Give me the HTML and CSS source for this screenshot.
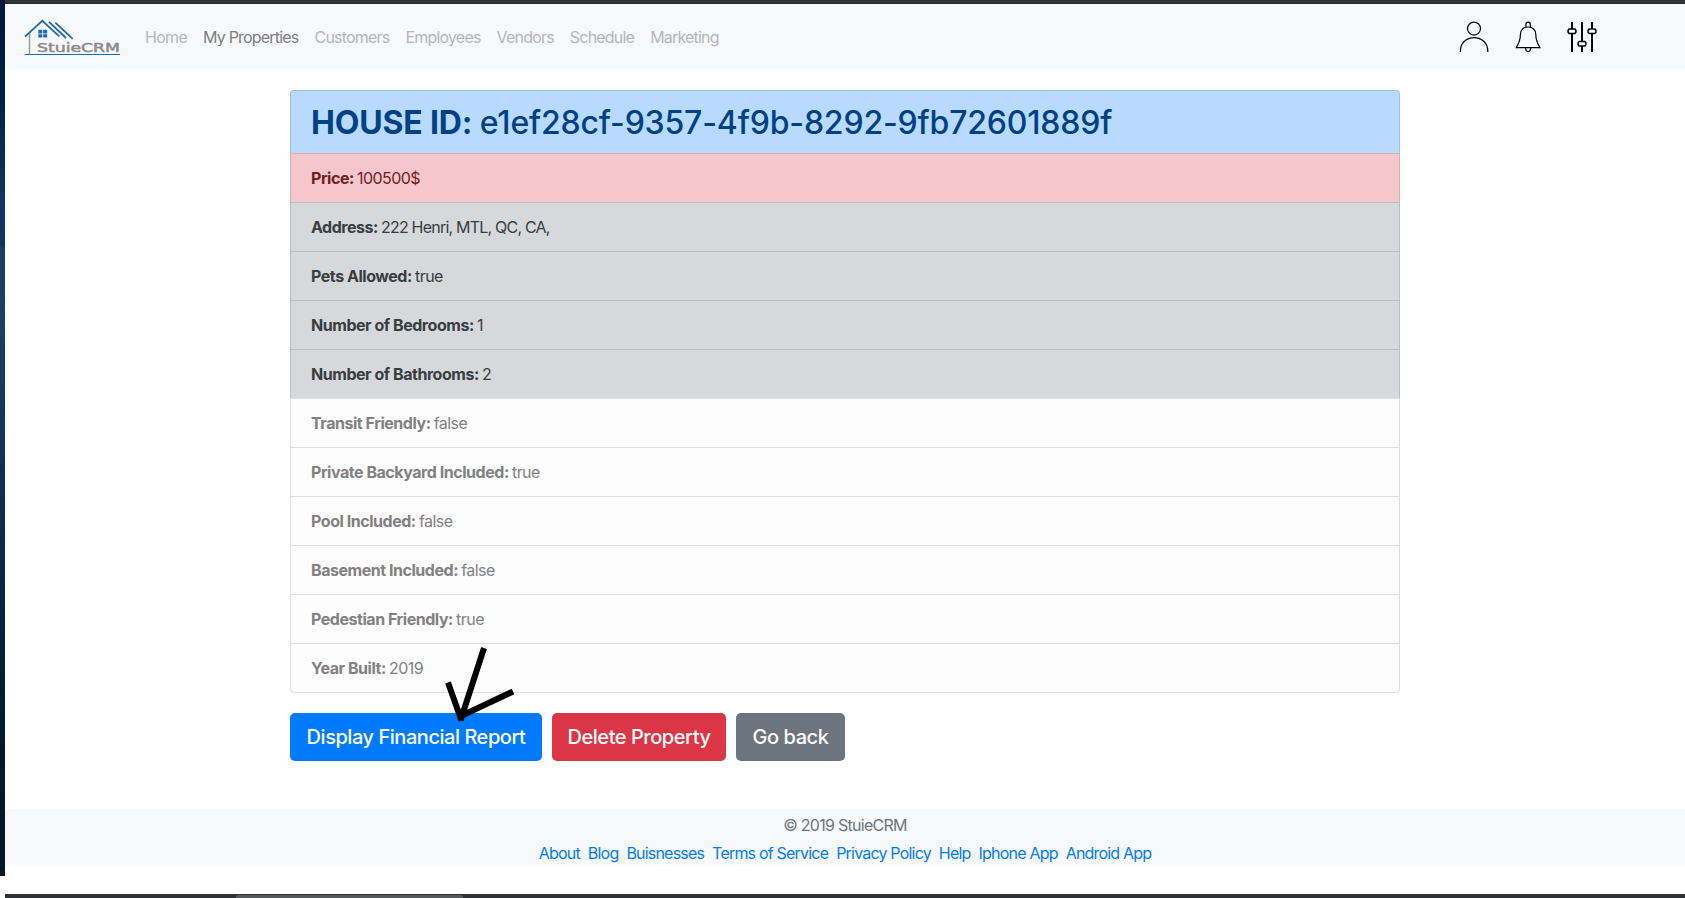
FILE: index.html
```html
<!DOCTYPE html>
<html lang="en">
<head>
<meta charset="utf-8">
<title>StuieCRM - My Properties</title>
<link rel="stylesheet" href="styles.css">
</head>
<body>
<div class="desktop-edge"></div>
<div class="window">
  <div class="window-top"></div>
  <header class="navbar">
    <a class="brand">
      <svg width="98" height="38" viewBox="0 0 98 38" fill="none">
        <path d="M6.500 13.500V35" stroke="#999" stroke-width="1.400"/>
        <path d="M2 17.700 19.300 1.800 36.300 17.300M26 2.800 43 19M32.300 3.700 49.700 19.900" stroke="#2069ab" stroke-width="1.800"/>
        <path d="M15.300 10.800h4v3.600h-4zM20.200 10.800h4v3.600h-4zM15.300 15.300h4v3.200h-4zM20.200 15.300h4v3.200h-4z" fill="#2069ab"/>
        <path d="M1.700 35.500H97" stroke="#2069ab" stroke-width="1.200"/>
        <text class="brand-text" x="14" y="32.500" textLength="83" lengthAdjust="spacingAndGlyphs">StuieCRM</text>
      </svg>
    </a>
    <nav class="nav">
      <a class="nav-link">Home</a>
      <a class="nav-link active">My Properties</a>
      <a class="nav-link">Customers</a>
      <a class="nav-link">Employees</a>
      <a class="nav-link">Vendors</a>
      <a class="nav-link">Schedule</a>
      <a class="nav-link">Marketing</a>
    </nav>
    <div class="nav-icons">
      <svg width="32" height="32" viewBox="0 0 32 32" fill="none" stroke="#000" stroke-width="1.200">
        <circle cx="16" cy="7.600" r="6.500"/>
        <path d="M2.400 31v-1C2.400 22 8.400 16.600 16 16.600S29.800 22 29.800 30v1"/>
      </svg>
      <svg width="32" height="32" viewBox="0 0 32 32" fill="none" stroke="#000" stroke-width="1.200">
        <path d="M4.300 26.600h23.600c-2.600-4.300-4.100-7.200-4.100-13.100 0-4.600-3.200-7.500-7.700-7.500s-7.700 2.900-7.700 7.500c0 5.900-1.500 8.800-4.100 13.100z"/>
        <path d="M13.900 6V3.300a2.200 2.200 0 0 1 4.400 0V6M13.600 27c0 2.200 1.100 3.500 2.500 3.500s2.500-1.300 2.500-3.500"/>
      </svg>
      <svg width="32" height="32" viewBox="0 0 32 32" fill="none" stroke="#000">
        <path d="M6 1v7M6 12.500v18.500M16 1v19.500M16 25v6M26 1v7M26 12.500v18.500" stroke-width="2"/>
        <path d="M3.100 8h5.800l1 1.200v2l-1 1.200H3.100l-1-1.200v-2zM13.100 20.500h5.800l1 1.200v2l-1 1.200h-5.800l-1-1.200v-2zM23.100 8h5.800l1 1.200v2l-1 1.200h-5.800l-1-1.200v-2z" stroke-width="1.500"/>
      </svg>
    </div>
  </header>
  <main class="container">
    <ul class="list-group">
      <li class="item primary"><h1><strong>HOUSE ID:</strong> e1ef28cf-9357-4f9b-8292-9fb72601889f</h1></li>
      <li class="item danger"><strong>Price:</strong> 100500$</li>
      <li class="item secondary tight"><strong>Address:</strong> 222 Henri, MTL, QC, CA,</li>
      <li class="item secondary"><strong>Pets Allowed:</strong> true</li>
      <li class="item secondary"><strong>Number of Bedrooms:</strong> 1</li>
      <li class="item secondary"><strong>Number of Bathrooms:</strong> 2</li>
      <li class="item light"><strong>Transit Friendly:</strong> false</li>
      <li class="item light"><strong>Private Backyard Included:</strong> true</li>
      <li class="item light"><strong>Pool Included:</strong> false</li>
      <li class="item light"><strong>Basement Included:</strong> false</li>
      <li class="item light"><strong>Pedestian Friendly:</strong> true</li>
      <li class="item light"><strong>Year Built:</strong> 2019</li>
    </ul>
    <div class="actions">
      <button class="btn btn-primary">Display Financial Report</button>
      <button class="btn btn-danger">Delete Property</button>
      <button class="btn btn-secondary">Go back</button>
      <svg class="pointer-arrow" width="80" height="84" viewBox="0 0 80 84" fill="none" stroke="#000" stroke-width="6">
        <path d="M44 8 20.500 80.500M8 42.500 21.500 80.500M73 51.500 20 76.500"/>
      </svg>
    </div>
  </main>
  <footer class="footer">
    <p class="copyright">© 2019 StuieCRM</p>
    <div class="links">
      <a>About</a><a>Blog</a><a>Buisnesses</a><a>Terms of Service</a><a>Privacy Policy</a><a>Help</a><a>Iphone App</a><a>Android App</a>
    </div>
  </footer>
  <div class="window-bottom"><div class="dock-tab"></div></div>
</div>
</body>
</html>
```
FILE: styles.css
```css
* { box-sizing: border-box; }
body {
  margin: 0;
  height: 898px;
  display: flex;
  overflow: hidden;
  background: #fff;
  color: #212529;
  font: 400 16px/24px Inter, "Liberation Sans", sans-serif;
}
.desktop-edge {
  width: 5px;
  height: 876px;
  flex: none;
  background: linear-gradient(#02173b 0, #021f45 90px, #14325f 200px, #15335f 246px, #1f3d67 248px, #1b3a60 380px, #112b50 500px, #0b2140 620px, #05192d 720px, #071625 876px);
}
.window { flex: 1; height: 898px; display: flex; flex-direction: column; }
.window-top { height: 4px; flex: none; background: #333336; border-bottom: 1px solid #29292c; }
.navbar {
  height: 66px;
  flex: none;
  display: flex;
  align-items: center;
  padding: 0 87px 0 18px;
  background: #f8f9fb;
}
.brand { display: flex; margin-right: 16px; }
.brand svg { margin-top: 2px; }
.brand-text { font: 400 13px "DejaVu Sans", sans-serif; fill: #8b8b8b; stroke: #8b8b8b; stroke-width: .5px; }
.nav { display: flex; }
.nav-link { padding: 8px; letter-spacing: -.8px; color: #b5b6b7; white-space: nowrap; }
.nav-link:first-child { letter-spacing: -.7px; }
.nav-link.active { color: #7d7e7f; }
.nav-icons { display: flex; gap: 22px; margin-left: auto; }
.container { width: 1110px; margin: 20px auto 0; }
.list-group { list-style: none; margin: 0; padding: 0; }
.item {
  padding: 12px 20px;
  margin-bottom: -1px;
  border: 1px solid rgba(0, 0, 0, .125);
  letter-spacing: -.55px;
}
.item:first-child { border-radius: 4px 4px 0 0; }
.item:last-child { border-radius: 0 0 4px 4px; margin-bottom: 0; }
.item strong { font-weight: 700; letter-spacing: -.46px; margin-right: -.8px; }
.item.tight { letter-spacing: -.78px; }
.primary { background: #b8daff; color: #004085; }
.danger { background: #f5c6cb; color: #721c24; }
.secondary { background: #d6d8db; color: #383d41; }
.light { background: #fdfdfd; color: #818182; position: relative; border-color: #dfdfdf; }
h1 { margin: 0; padding-top: 1px; font-size: 32px; line-height: 37.400px; font-weight: 500; letter-spacing: -.17px; }
.item h1 strong { letter-spacing: -.17px; }
.actions { position: relative; display: flex; gap: 10px; margin-top: 20px; }
.btn {
  height: 48px;
  padding: 0;
  border: 0;
  border-radius: 5px;
  color: #fff;
  font: 450 20px/30px Inter, sans-serif;
  letter-spacing: -.46px;
  text-align: center;
  white-space: nowrap;
}
.btn-primary { width: 252px; background: #007bff; }
.btn-danger { width: 174px; background: #dc3545; }
.btn-secondary { width: 109px; background: #6c757d; }
.pointer-arrow { position: absolute; left: 150px; top: -73px; }
.footer {
  height: 56px;
  margin-top: 48px;
  padding-top: 4px;
  background: #f8f9fb;
  text-align: center;
}
.copyright { margin: 0 0 4px; color: #6c757d; letter-spacing: -.72px; }
.links { display: flex; justify-content: center; gap: 8px; color: #007bff; letter-spacing: -.8px; white-space: nowrap; }
.window-bottom { height: 4px; margin-top: auto; padding: 1px 0 0 231px; background: #2f3137; }
.dock-tab { width: 227px; height: 3px; background: #57595d; border-radius: 2px 2px 0 0; }
```
